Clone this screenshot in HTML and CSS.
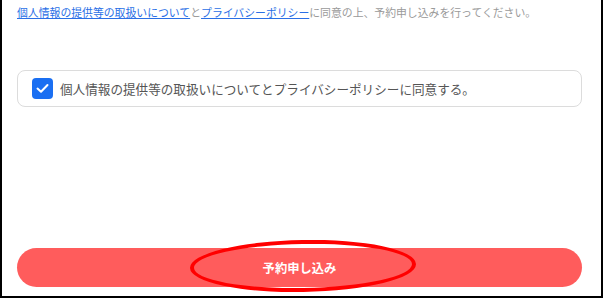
FILE: index.html
```html
<!DOCTYPE html>
<html lang="ja">
<head>
    <meta charset="UTF-8">
    <meta name="viewport" content="width=device-width, initial-scale=1.0">
    <title>予約申し込み</title>
    <link rel="stylesheet" href="styles.css">
</head>
<body>
    <div class="frame">
        <p class="notice">
            <a href="#">個人情報の提供等の取扱いについて</a>と<a href="#">プライバシーポリシー</a>に同意の上、予約申し込みを行ってください。
        </p>

        <label class="consent">
            <span class="check">
                <svg width="13" height="11" viewBox="0 0 13 11"><path d="M1.5 5.6 L5 8.8 L11.5 2" fill="none" stroke="#fff" stroke-width="2" stroke-linecap="round" stroke-linejoin="round"/></svg>
            </span>
            <span class="consent-text">個人情報の提供等の取扱いについてとプライバシーポリシーに同意する。</span>
        </label>

        <div class="submit-wrap">
            <button class="btn-submit">予約申し込み</button>
            <!-- red annotation circle -->
            <span class="mark"></span>
        </div>
    </div>
</body>
</html>
```

FILE: styles.css
```css
* {
    margin: 0;
    padding: 0;
    box-sizing: border-box;
}

body {
    font-family: "Noto Sans CJK JP", "Noto Sans", sans-serif;
    background: #fff;
    width: 603px;
    height: 298px;
    overflow: hidden;
}

.frame {
    position: relative;
    width: 603px;
    height: 298px;
    border: 2px solid #000;
    border-top: none;
    padding: 0 19px 0 15px;
    display: flex;
    flex-direction: column;
}

.notice {
    margin-top: 4px;
    font-size: 10.85px;
    line-height: 16px;
    color: #9a9a9a;
    white-space: nowrap;
}

.notice a {
    color: #2a6fe6;
    text-decoration: underline;
}

.consent {
    margin-top: 50px;
    height: 37px;
    border: 1px solid #dcdcdc;
    border-radius: 8px;
    display: flex;
    align-items: center;
    padding: 0 14px;
    gap: 7px;
}

.check {
    width: 21px;
    height: 21px;
    border-radius: 4px;
    background: #1a6ff2;
    display: flex;
    align-items: center;
    justify-content: center;
    flex-shrink: 0;
}

.consent-text {
    font-size: 12.6px;
    color: #555;
    white-space: nowrap;
}

.submit-wrap {
    position: relative;
    margin-top: auto;
    margin-bottom: 9px;
}

.btn-submit {
    width: 100%;
    height: 39px;
    border: none;
    border-radius: 20px;
    background: #ff5c5c;
    color: #fff;
    font-family: "Noto Sans CJK JP", sans-serif;
    font-size: 12.3px;
    font-weight: bold;
    display: block;
}

.mark {
    position: absolute;
    left: 173px;
    top: -8px;
    width: 226px;
    height: 52px;
    border: 4px solid #ff0000;
    border-radius: 50%;
    transform: rotate(-1deg);
}
```
